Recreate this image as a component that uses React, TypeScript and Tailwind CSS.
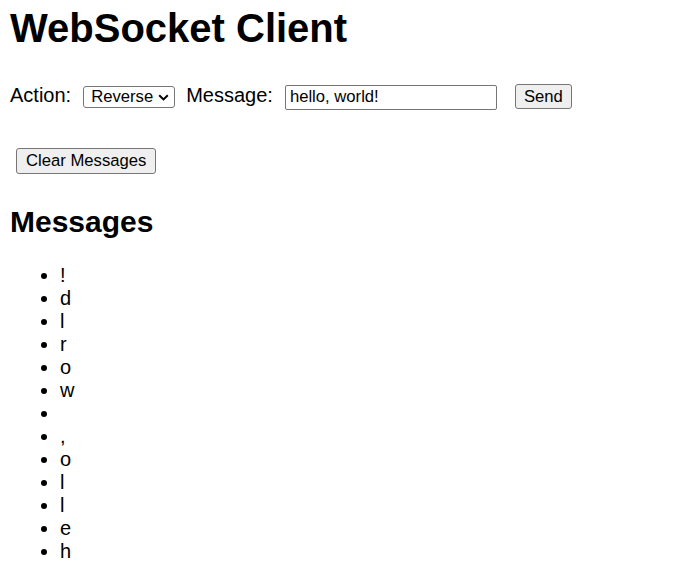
import React, { useState } from "react";

const initialMessages = ["!", "d", "l", "r", "o", "w", " ", ",", "o", "l", "l", "e", "h"];

const App = () => {
  const [action, setAction] = useState("reverse");
  const [text, setText] = useState("hello, world!");
  const [messages, setMessages] = useState<string[]>(initialMessages);

  const send = () => {
    const out = action === "reverse" ? text.split("").reverse() : [text];
    setMessages([...messages, ...out]);
  };

  return (
    <div className="flex flex-col items-start px-[10px] font-['Liberation_Sans',Arial,sans-serif] text-[20px] text-black bg-white min-h-screen">
      <h1 className="mt-[5px] text-[40px] leading-[46px] font-bold">WebSocket Client</h1>

      <div className="mt-[33px] flex items-baseline leading-[23px]">
        <span>Action:</span>
        <span className="relative ml-[12px] inline-flex">
          <select
            value={action}
            onChange={(e) => setAction(e.target.value)}
            className="appearance-none h-[22px] w-[92px] pl-[7px] pr-[20px] border border-[#767676] rounded-[3px] bg-white text-[16.67px] leading-[20px] outline-none"
          >
            <option value="reverse">Reverse</option>
            <option value="echo">Echo</option>
          </select>
          <svg
            className="pointer-events-none absolute right-[6px] top-[8px]"
            width="11"
            height="7"
            viewBox="0 0 11 7"
            fill="none"
          >
            <path d="M1.2 1.2 L5.5 5.4 L9.8 1.2" stroke="#000" strokeWidth="2" />
          </svg>
        </span>
        <span className="ml-[11px]">Message:</span>
        <input
          value={text}
          onChange={(e) => setText(e.target.value)}
          className="ml-[12px] h-[25px] w-[212px] px-[4px] border border-[#767676] rounded-[2px] text-[16.67px] outline-none"
        />
        <button
          onClick={send}
          className="ml-[18px] h-[25px] px-[8px] border border-[#767676] rounded-[3px] bg-[#efefef] text-[16.67px] leading-[19px]"
        >
          Send
        </button>
      </div>

      <button
        onClick={() => setMessages([])}
        className="mt-[38px] ml-[6px] h-[26px] px-[9px] border border-[#767676] rounded-[3px] bg-[#efefef] text-[16.67px] leading-[19px]"
      >
        Clear Messages
      </button>

      <h2 className="mt-[31px] text-[30px] leading-[34.5px] font-bold">Messages</h2>

      <ul className="mt-[25px] pl-[50px] list-disc leading-[23px]">
        {messages.map((m, i) => (
          <li key={i}>{m === " " ? "\u00a0" : m}</li>
        ))}
      </ul>
    </div>
  );
};

export default App;
